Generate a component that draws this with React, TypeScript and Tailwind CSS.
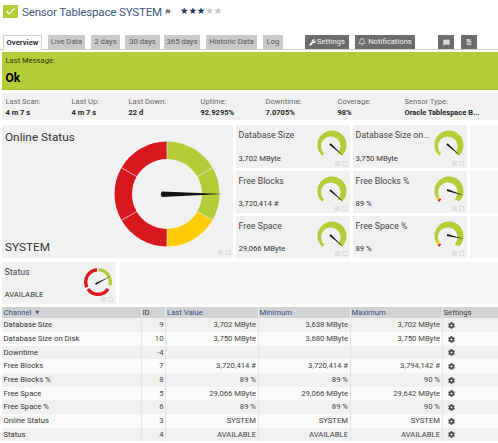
import React from "react";
import { Check, Wrench, Bell, MessageSquare, FileText, Flag } from "lucide-react";
import { FaCog } from "react-icons/fa";

const pt = (cx: number, cy: number, r: number, deg: number): [number, number] => {
  const a = ((deg - 90) * Math.PI) / 180;
  return [cx + r * Math.cos(a), cy + r * Math.sin(a)];
};

function seg(cx: number, cy: number, R: number, r: number, a0: number, a1: number, ix = cx, iy = cy) {
  const [x0, y0] = pt(cx, cy, R, a0);
  const [x1, y1] = pt(cx, cy, R, a1);
  const [x2, y2] = pt(ix, iy, r, a1);
  const [x3, y3] = pt(ix, iy, r, a0);
  const large = a1 - a0 > 180 ? 1 : 0;
  return `M${x0} ${y0}A${R} ${R} 0 ${large} 1 ${x1} ${y1}L${x2} ${y2}A${r} ${r} 0 ${large} 0 ${x3} ${y3}Z`;
}

function needle(cx: number, cy: number, tipX: number, tipY: number, w: number) {
  const dx = tipX - cx;
  const dy = tipY - cy;
  const l = Math.hypot(dx, dy);
  const nx = (-dy / l) * w;
  const ny = (dx / l) * w;
  return `M${cx + nx} ${cy + ny}L${tipX} ${tipY}L${cx - nx} ${cy - ny}Z`;
}

const GREEN = "#b4cc38";
const RED = "#d7191e";
const YELLOW = "#ffcb05";

function BigGauge() {
  const c = 57;
  return (
    <svg width="114" height="114" viewBox="0 0 114 114" className="shrink-0">
      <path d={seg(c, c, 52.5, 35, 0.4, 59.6)} fill={GREEN} />
      <path d={seg(c, c, 52.5, 35, 60.4, 119.6)} fill={GREEN} />
      <path d={seg(c, c, 52.5, 35, 120.4, 179.6)} fill={YELLOW} />
      <path d={seg(c, c, 52.5, 35, 180.4, 239.6)} fill={RED} />
      <path d={seg(c, c, 52.5, 35, 240.4, 299.6)} fill={RED} />
      <path d={seg(c, c, 52.5, 35, 300.4, 359.6)} fill={RED} />
      <path d="M52 54.5L112 57L52 60Q49.5 57 52 54.5Z" fill="#111" />
    </svg>
  );
}

type GaugeKind = "plain" | "warn";

function SmallGauge({ kind, tip }: { kind: GaugeKind; tip: [number, number] }) {
  const c = 16;
  const ix = c - 1.2;
  const iy = c + 1.2;
  const r = 9.8;
  return (
    <svg width="32" height="32" viewBox="0 0 32 32" className="shrink-0">
      <circle cx="1.6" cy="12.5" r="0.7" fill="#c9c9c9" />
      {kind === "plain" ? (
        <path d={seg(c, c, 14.5, r, 222, 495, ix, iy)} fill={GREEN} />
      ) : (
        <>
          <path d={seg(c, c, 14.5, r, 222, 232, ix, iy)} fill={RED} />
          <path d={seg(c, c, 14.5, r, 232, 246, ix, iy)} fill={YELLOW} />
          <path d={seg(c, c, 14.5, r, 246, 495, ix, iy)} fill={GREEN} />
        </>
      )}
      <path d={needle(c - 2, c - 1, tip[0], tip[1], 1)} fill="#111" />
    </svg>
  );
}

function StatusGauge() {
  const c = 16;
  return (
    <svg width="32" height="32" viewBox="0 0 32 32" className="shrink-0">
      <path d={seg(c, c, 14, 10.6, 2, 105)} fill={GREEN} />
      <path d={seg(c, c, 14, 10.6, 125, 235)} fill={RED} />
      <path d={seg(c, c, 14, 10.6, 245, 356)} fill={RED} />
      <path d={needle(13.5, 18, 29, 10, 0.9)} fill="#111" />
    </svg>
  );
}

function PinMarks({ big }: { big?: boolean }) {
  return (
    <div className={`absolute flex items-center ${big ? "right-[2px] bottom-[3px] gap-[3px]" : "right-[3px] bottom-[2px] gap-[2px]"}`}>
      <span className="w-[5px] h-[5px] bg-[#e0e0e0]" />
      <span className="w-[5px] h-[5px] border border-[#dcdcdc]" />
    </div>
  );
}

function Tile({ title, value, gauge, className = "" }: { title: string; value: string; gauge: React.ReactNode; className?: string }) {
  return (
    <div className={`relative bg-[#f1f1f1] flex justify-between pr-[2px] ${className}`}>
      <div className="flex flex-col justify-between pl-[2.5px] pt-[4px] pb-[4px] min-w-0">
        <div className="text-[8.8px] leading-[13px] text-[#444] whitespace-nowrap">{title}</div>
        <div className="text-[7.7px] leading-[11px] text-[#333] whitespace-nowrap">{value}</div>
      </div>
      <div className="pt-[4px] -ml-[10px]">{gauge}</div>
      <PinMarks />
    </div>
  );
}

const tabs = [
  { t: "Live Data", w: "w-[37px]", ml: "ml-[6px]" },
  { t: "2 days", w: "w-[29px]", ml: "ml-[6px]" },
  { t: "30 days", w: "w-[35px]", ml: "ml-[5px]" },
  { t: "365 days", w: "w-[36px]", ml: "ml-[4px]" },
  { t: "Historic Data", w: "w-[51px]", ml: "ml-[6px]" },
  { t: "Log", w: "w-[20px]", ml: "ml-[6px]" },
];

const stats: [string, string][] = [
  ["Last Scan:", "4 m 7 s"],
  ["Last Up:", "4 m 7 s"],
  ["Last Down:", "22 d"],
  ["Uptime:", "92.9295%"],
  ["Downtime:", "7.0705%"],
  ["Coverage:", "98%"],
  ["Sensor Type:", "Oracle Tablespace B..."],
];

const rows: [string, string, string, string, string][] = [
  ["Database Size", "9", "3,702 MByte", "3,638 MByte", "3,702 MByte"],
  ["Database Size on Disk", "10", "3,750 MByte", "3,680 MByte", "3,750 MByte"],
  ["Downtime", "-4", "", "", ""],
  ["Free Blocks", "7", "3,720,414 #", "3,720,414 #", "3,794,142 #"],
  ["Free Blocks %", "8", "89 %", "89 %", "90 %"],
  ["Free Space", "5", "29,066 MByte", "29,066 MByte", "29,642 MByte"],
  ["Free Space %", "6", "89 %", "89 %", "90 %"],
  ["Online Status", "3", "SYSTEM", "SYSTEM", "SYSTEM"],
  ["Status", "4", "AVAILABLE", "AVAILABLE", "AVAILABLE"],
];

export default function App() {
  return (
    <div className="w-[498px] h-[443px] overflow-hidden bg-white font-['Roboto','Open_Sans',sans-serif] text-[#333]">
      {/* Title */}
      <div className="h-[35px] flex items-start pl-[3px] pt-[5px]">
        <div className="w-[15px] h-[13px] bg-[#b4cc38] flex items-center justify-center">
          <Check size={11} strokeWidth={2.5} color="#fff" />
        </div>
        <h1 className="ml-[4px] -mt-[3px] text-[11.6px] tracking-[-0.2px] leading-[20px] font-normal text-[#41597e] whitespace-nowrap w-[143px]">
          Sensor Tablespace SYSTEM
        </h1>
        <Flag size={6} className="mt-[4px] text-[#777] fill-[#777]" />
        <div className="ml-[9px] -mt-[1px] flex text-[9.5px] leading-[14px] font-['DejaVu_Sans',sans-serif] tracking-[-0.1px]">
          <span className="text-[#1f3560]">★★★</span>
          <span className="text-[#c4c4c4]">★★</span>
        </div>
      </div>

      {/* Tabs */}
      <div className="h-[15px] flex items-start pl-[3px] border-b border-[#d0d0d0] text-[7.7px] leading-[14px]">
        <div className="w-[39px] h-[15px] bg-white border border-b-0 border-[#d4d4d4] text-center font-bold text-[#333]">Overview</div>
        {tabs.map((t) => (
          <div key={t.t} className={`${t.w} ${t.ml} h-[14px] bg-[#c9c9c9] text-[#5a5a5a] text-center whitespace-nowrap`}>
            {t.t}
          </div>
        ))}
        <div className="ml-[22px] w-[44px] h-[14px] bg-[#6c6c6c] text-[#f2f2f2] flex items-center justify-center gap-[1px]">
          <Wrench size={7} className="fill-white" color="#fff" />
          <span>Settings</span>
        </div>
        <div className="ml-[6px] w-[60px] h-[14px] bg-[#6c6c6c] text-[#f2f2f2] flex items-center justify-center gap-[2px]">
          <Bell size={8} color="#fff" />
          <span>Notifications</span>
        </div>
        <div className="ml-[23px] w-[16px] h-[14px] bg-[#6c6c6c] flex items-center justify-center">
          <MessageSquare size={7} color="#ddd" className="fill-[#ddd]" />
        </div>
        <div className="ml-[7px] w-[16px] h-[14px] bg-[#6c6c6c] flex items-center justify-center">
          <FileText size={8} color="#555" className="fill-[#eee]" />
        </div>
      </div>

      {/* Message */}
      <div className="mt-[2px] ml-[2px] h-[38px] bg-[#b4cc38] border-b border-[#a6be2f] pl-[3.5px] pt-[3px]">
        <div className="text-[7.6px] leading-[11px] text-[#2c3208]">Last Message:</div>
        <div className="mt-[5px] text-[12px] leading-[14px] font-bold text-black">Ok</div>
      </div>

      {/* Stats */}
      <div className="mt-[3px] ml-[2px] h-[27px] bg-[#f1f1f1] pl-[3.5px] pt-[3px] grid grid-cols-[66px_57px_72px_65px_72px_67px_1fr]">
        {stats.map(([l, v]) => (
          <div key={l} className="whitespace-nowrap">
            <div className="text-[7.6px] leading-[11px] text-[#666]">{l}</div>
            <div className="text-[7.5px] leading-[11px] font-bold text-[#222]">{v}</div>
          </div>
        ))}
      </div>

      {/* Gauges */}
      <div className="mt-[5px] ml-[2px] grid grid-cols-[231px_114px_114px_1fr] grid-rows-[43px_42px_42px] gap-[3px]">
        <div className="relative row-span-3 bg-[#f1f1f1] flex justify-between pr-[9px] pt-[12px]">
          <div className="absolute left-[3px] top-[3px] text-[11.8px] leading-[18px] text-[#333]">Online Status</div>
          <div className="absolute left-[3px] bottom-[2px] text-[11.8px] leading-[18px] text-[#333]">SYSTEM</div>
          <div />
          <BigGauge />
          <PinMarks big />
        </div>
        <Tile title="Database Size" value="3,702 MByte" gauge={<SmallGauge kind="plain" tip={[27.5, 27]} />} />
        <Tile title="Database Size on..." value="3,750 MByte" gauge={<SmallGauge kind="plain" tip={[27.5, 27]} />} />
        <div className="bg-[#f5f5f5]" />
        <Tile title="Free Blocks" value="3,720,414 #" gauge={<SmallGauge kind="plain" tip={[27.5, 27]} />} />
        <Tile title="Free Blocks %" value="89 %" gauge={<SmallGauge kind="warn" tip={[31, 20.5]} />} />
        <div className="bg-[#f5f5f5]" />
        <Tile title="Free Space" value="29,066 MByte" gauge={<SmallGauge kind="plain" tip={[27.5, 27]} />} />
        <Tile title="Free Space %" value="89 %" gauge={<SmallGauge kind="warn" tip={[31, 19]} />} />
        <div className="bg-[#f5f5f5]" />
      </div>

      {/* Status row */}
      <div className="mt-[4px] ml-[2px] h-[42px] grid grid-cols-[114px_1fr] gap-[3px]">
        <Tile title="Status" value="AVAILABLE" gauge={<StatusGauge />} />
        <div className="bg-[#f5f5f5]" />
      </div>

      {/* Table */}
      <table className="mt-[3px] ml-[2px] w-[496px] table-fixed border-collapse text-[7.7px] leading-[10px]">
        <colgroup>
          <col className="w-[139px]" />
          <col className="w-[24px]" />
          <col className="w-[93px]" />
          <col className="w-[92px]" />
          <col className="w-[92px]" />
          <col className="w-[56px]" />
        </colgroup>
        <thead>
          <tr className="h-[11px] bg-[#d2d2d2]">
            <th className="p-0 pl-[1.5px] text-left font-normal text-[#2f4d7f] border-r border-[#ececec] whitespace-nowrap">
              Channel <span className="text-[5px] leading-none ml-[2px] align-middle font-['DejaVu_Sans',sans-serif]">▼</span>
            </th>
            <th className="p-0 pl-[1px] text-left font-normal text-[#333] border-r border-[#ececec]">ID</th>
            <th className="p-0 pl-[1.5px] text-left font-normal text-[#2f4d7f] border-r border-[#ececec]">Last Value</th>
            <th className="p-0 pl-[1px] text-left font-normal text-[#2f4d7f] border-r border-[#ececec]">Minimum</th>
            <th className="p-0 pl-[1px] text-left font-normal text-[#2f4d7f] border-r border-[#ececec]">Maximum</th>
            <th className="p-0 pl-[1px] text-left font-normal text-[#444]">Settings</th>
          </tr>
        </thead>
        <tbody>
          {rows.map((r, i) => (
            <tr key={r[0]} className={`${i % 3 === 2 ? "h-[13px]" : "h-[14px]"} ${i % 2 === 0 ? "bg-[#f0f0f0]" : "bg-[#fafafa]"}`}>
              <td className="p-0 pl-[1.5px] border-r border-[#e4e4e4] text-[#333] whitespace-nowrap">{r[0]}</td>
              <td className="p-0 pr-[1px] text-right border-r border-[#e4e4e4] text-[#444]">{r[1]}</td>
              <td className="p-0 pr-[1.5px] text-right border-r border-[#e4e4e4] text-[#444] whitespace-nowrap">{r[2]}</td>
              <td className="p-0 pr-[1.5px] text-right border-r border-[#e4e4e4] text-[#444] whitespace-nowrap">{r[3]}</td>
              <td className="p-0 pr-[1.5px] text-right border-r border-[#e4e4e4] text-[#444] whitespace-nowrap">{r[4]}</td>
              <td className="p-0 pl-[5px]">
                <FaCog size={7} color="#444" />
              </td>
            </tr>
          ))}
        </tbody>
      </table>
    </div>
  );
}
